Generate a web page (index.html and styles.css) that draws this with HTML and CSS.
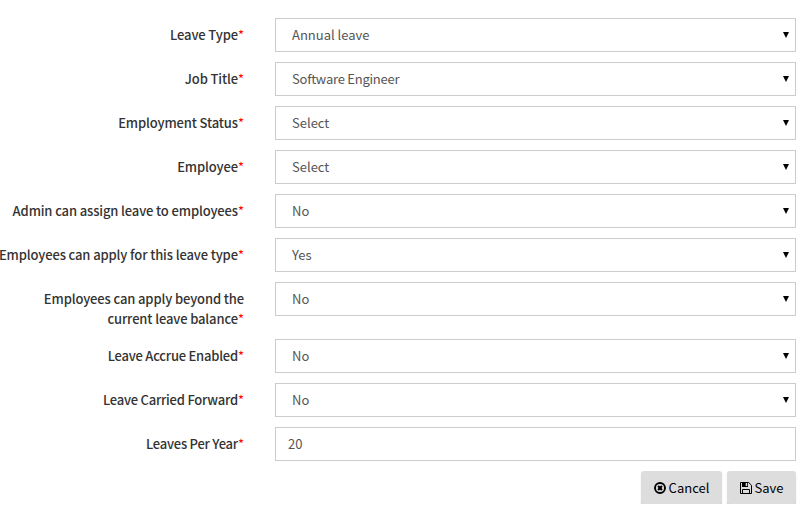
FILE: index.html
```html
<!DOCTYPE html>
<html lang="en">
<head>
    <meta charset="UTF-8">
    <meta name="viewport" content="width=device-width, initial-scale=1.0">
    <title>Leave Type</title>
    <link rel="stylesheet" href="styles.css">
</head>
<body>
    <form class="leave-form">
        <div class="form-group">
            <label for="leaveType">Leave Type<span class="required">*</span></label>
            <div class="select-wrap">
                <select id="leaveType"><option>Annual leave</option></select>
            </div>
        </div>
        <div class="form-group">
            <label for="jobTitle">Job Title<span class="required">*</span></label>
            <div class="select-wrap">
                <select id="jobTitle" class="tight"><option>Software Engineer</option></select>
            </div>
        </div>
        <div class="form-group">
            <label for="employmentStatus">Employment Status<span class="required">*</span></label>
            <div class="select-wrap">
                <select id="employmentStatus"><option>Select</option></select>
            </div>
        </div>
        <div class="form-group">
            <label for="employee">Employee<span class="required">*</span></label>
            <div class="select-wrap">
                <select id="employee"><option>Select</option></select>
            </div>
        </div>
        <div class="form-group">
            <label for="adminAssign">Admin can assign leave to employees<span class="required">*</span></label>
            <div class="select-wrap">
                <select id="adminAssign"><option>No</option><option>Yes</option></select>
            </div>
        </div>
        <div class="form-group">
            <label for="employeeApply">Employees can apply for this leave type<span class="required">*</span></label>
            <div class="select-wrap">
                <select id="employeeApply"><option>Yes</option><option>No</option></select>
            </div>
        </div>
        <div class="form-group">
            <label for="beyondBalance">Employees can apply beyond the<br>current leave balance<span class="required">*</span></label>
            <div class="select-wrap">
                <select id="beyondBalance"><option>No</option><option>Yes</option></select>
            </div>
        </div>
        <div class="form-group">
            <label for="accrue" class="tight">Leave Accrue Enabled<span class="required">*</span></label>
            <div class="select-wrap">
                <select id="accrue"><option>No</option><option>Yes</option></select>
            </div>
        </div>
        <div class="form-group">
            <label for="carried" class="tight">Leave Carried Forward<span class="required">*</span></label>
            <div class="select-wrap">
                <select id="carried"><option>No</option><option>Yes</option></select>
            </div>
        </div>
        <div class="form-group">
            <label for="perYear" class="tight">Leaves Per Year<span class="required">*</span></label>
            <input type="text" id="perYear" value="20">
        </div>

        <div class="form-actions">
            <button type="button" class="cancel">
                <svg width="12" height="12" viewBox="0 0 12 12">
                    <circle cx="6" cy="6" r="5" fill="none" stroke="#000" stroke-width="1.9"/>
                    <path d="M4.1 4.1l3.8 3.8M7.9 4.1L4.1 7.9" stroke="#000" stroke-width="2.1"/>
                </svg>
                <span>Cancel</span>
            </button>
            <button type="button" class="save">
                <svg width="12" height="12" viewBox="0 0 12 12">
                    <path d="M.5.5h8.2l2.8 2.8v8.2H.5z" fill="none" stroke="#000"/>
                    <path d="M2.5 11.5v-4h7v4" fill="none" stroke="#000"/>
                    <path d="M2 0h6v5H2zM5.7 1v3h1.5V1z" fill="#000" fill-rule="evenodd"/>
                </svg>
                <span>Save</span>
            </button>
        </div>
    </form>
</body>
</html>
```
FILE: styles.css
```css
body {
    margin: 0;
    background-color: #fff;
    font-family: "Noto Sans CJK SC", "Open Sans", sans-serif;
    font-size: 13px;
    line-height: 20px;
    color: #333;
    overflow: hidden;
}
.leave-form {
    display: flex;
    flex-direction: column;
    gap: 10px;
    padding: 18px 11px 0 0;
}
.form-group {
    display: flex;
    align-items: flex-start;
    justify-content: flex-end;
    gap: 31px;
}
label {
    padding-top: 7px;
    font-weight: 500;
    letter-spacing: -0.13px;
    text-align: right;
    white-space: nowrap;
}
.required {
    color: #f00;
    font-weight: 400;
    letter-spacing: 0;
}
.select-wrap {
    position: relative;
    width: 521px;
    flex-shrink: 0;
}
select,
input {
    display: block;
    box-sizing: border-box;
    width: 521px;
    height: 34px;
    margin: 0;
    padding: 0 16px;
    border: 1px solid #ccc;
    border-radius: 0;
    background-color: #fff;
    color: #555;
    font: inherit;
    appearance: none;
}
input {
    flex-shrink: 0;
    padding: 0 12px 2px;
}
.tight {
    letter-spacing: -0.23px;
}
.select-wrap::after {
    content: "";
    position: absolute;
    top: 14px;
    right: 7px;
    border: 3px solid transparent;
    border-top: 6px solid #000;
    border-bottom: 0;
    pointer-events: none;
}
.form-actions {
    display: flex;
    justify-content: flex-end;
    gap: 5px;
}
button {
    display: flex;
    align-items: center;
    justify-content: center;
    gap: 3px;
    height: 33px;
    padding: 0;
    border: 0;
    border-radius: 3px;
    background-color: #ddd;
    box-shadow: 0 1px 1px rgba(0, 0, 0, 0.25);
    color: #000;
    font: inherit;
    cursor: pointer;
}
.cancel {
    width: 81px;
}
.save {
    width: 69px;
}
```
